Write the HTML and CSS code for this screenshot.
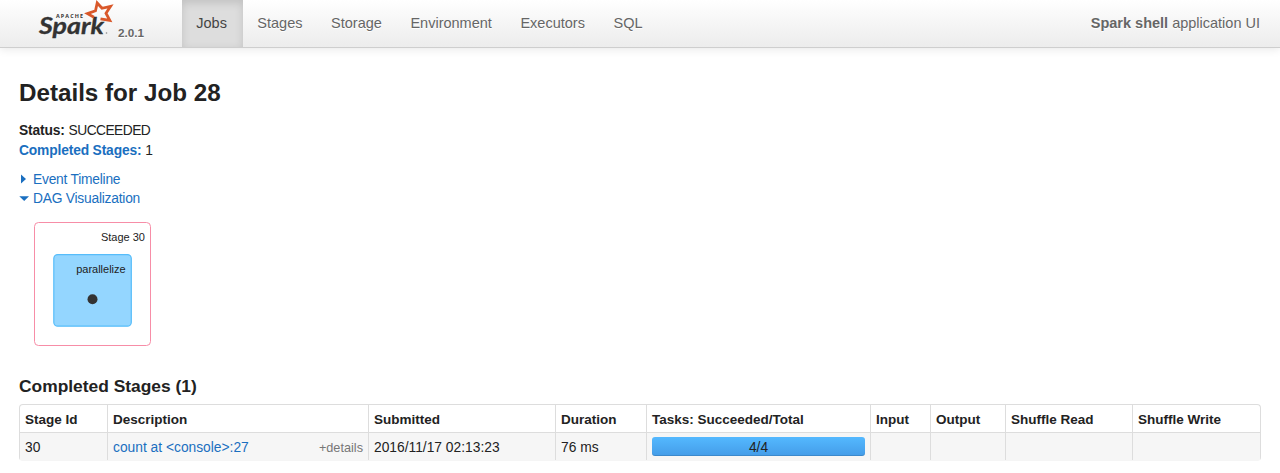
FILE: index.html
```html
<!DOCTYPE html>
<html lang="en">
<head>
<meta charset="utf-8">
<title>Spark shell - Details for Job 28</title>
<link rel="stylesheet" href="styles.css">
</head>
<body>
<header class="navbar">
  <a class="brand">
    <svg class="logo" width="76" height="42" viewBox="0 0 76 42">
      <text class="logo-apache" x="17" y="17.8" textLength="27">APACHE</text>
      <text class="logo-spark" x="0" y="34" textLength="65" lengthAdjust="spacingAndGlyphs">Spark</text>
      <path class="logo-star" d="M55 17.2 L48.5 13.6 L56.5 10.8 L58.2 3 L63 8.3 L71.5 6.3 L67 13.2 L70.8 20.3 L61.5 18.8"/>
      <circle class="logo-tm" cx="67.5" cy="33" r="0.8"/>
    </svg>
    <span class="version">2.0.1</span>
  </a>
  <nav class="nav">
    <a class="nav-item active">Jobs</a>
    <a class="nav-item">Stages</a>
    <a class="nav-item">Storage</a>
    <a class="nav-item">Environment</a>
    <a class="nav-item">Executors</a>
    <a class="nav-item">SQL</a>
  </nav>
  <p class="app-name"><strong>Spark shell</strong> application UI</p>
</header>
<main class="content">
  <h3 class="title">Details for Job 28</h3>
  <ul class="summary">
    <li><strong>Status:</strong> <span class="status">SUCCEEDED</span></li>
    <li><a class="link"><strong>Completed Stages:</strong></a> 1</li>
  </ul>
  <div class="toggle link">
    <svg class="arrow" width="12" height="12" viewBox="0 0 12 12"><path d="M2 0.6 L7 5 L2 9.4z"/></svg>
    <span>Event Timeline</span>
  </div>
  <div class="toggle link">
    <svg class="arrow" width="12" height="12" viewBox="0 0 12 12"><path d="M0.3 3.2 L10 3.2 L5.2 8z"/></svg>
    <span>DAG Visualization</span>
  </div>
  <svg class="dag" width="118" height="125" viewBox="0 0 118 125">
    <rect class="stage" x="0.5" y="0.5" width="116" height="123" rx="4"/>
    <text class="dag-label" x="111" y="19" text-anchor="end">Stage 30</text>
    <rect class="operation" x="19.8" y="32.6" width="77.5" height="71.6" rx="4"/>
    <text class="dag-label" x="91.7" y="51" text-anchor="end">parallelize</text>
    <circle class="rdd" cx="58.5" cy="77.2" r="5"/>
  </svg>
  <h4 class="subtitle">Completed Stages (1)</h4>
  <table class="stages">
    <colgroup>
      <col class="c-id"><col class="c-desc"><col class="c-sub"><col class="c-dur"><col class="c-tasks"><col class="c-in"><col class="c-out"><col class="c-read"><col class="c-write">
    </colgroup>
    <thead>
      <tr><th>Stage Id</th><th>Description</th><th>Submitted</th><th>Duration</th><th>Tasks: Succeeded/Total</th><th>Input</th><th>Output</th><th>Shuffle Read</th><th>Shuffle Write</th></tr>
    </thead>
    <tbody>
      <tr>
        <td>30</td>
        <td><div class="desc"><a class="link">count at &lt;console&gt;:27</a><span class="details">+details</span></div></td>
        <td>2016/11/17 02:13:23</td>
        <td>76 ms</td>
        <td><div class="progress">4/4</div></td>
        <td></td><td></td><td></td><td></td>
      </tr>
    </tbody>
  </table>
</main>
</body>
</html>
```
FILE: styles.css
```css
* { box-sizing: border-box; }
body {
  margin: 0;
  background: #fff;
  color: #222;
  font: 13.8px/20px "Liberation Sans", Arial, sans-serif;
}
.navbar {
  display: flex;
  height: 48px;
  border-bottom: 1px solid #cecece;
  background: linear-gradient(#fff, #ececec);
  box-shadow: 0 1px 9px rgba(0, 0, 0, 0.1);
  color: #666;
  font-size: 14.5px;
  text-shadow: 0 1px 0 #fff;
}
.brand {
  display: flex;
  width: 182px;
  padding-left: 39px;
}
.logo { flex: none; overflow: visible; text-shadow: none; }
.logo-apache { font: bold 5.4px "Open Sans", sans-serif; fill: #333; }
.logo-spark {
  font: italic bold 23.5px Lato, sans-serif;
  fill: #333;
  stroke: #333;
  stroke-width: 0.3;
}
.logo-star { fill: none; stroke: #d9582a; stroke-width: 2.8; }
.logo-tm { fill: #888; }
.version {
  padding: 23px 0 0 3px;
  font-size: 11.7px;
  font-weight: bold;
}
.nav { display: flex; }
.nav-item { height: 47px; padding: 13px 14.3px 0; }
.active {
  width: 61px;
  background: #ddd;
  box-shadow: inset 0 3px 8px rgba(0, 0, 0, 0.13);
  color: #444;
  text-shadow: none;
}
.app-name { margin: 13px 20px 0 auto; }
.content { padding: 29px 19px 0; }
.title {
  margin: 0;
  font-size: 24.2px;
  line-height: 32px;
}
.summary {
  margin: 12px 0 9px;
  padding: 0;
  list-style: none;
}
.summary strong { letter-spacing: -0.15px; }
.status { letter-spacing: -0.55px; }
.link { color: #1a6fc0; }
.toggle {
  display: flex;
  align-items: center;
  height: 19px;
  letter-spacing: -0.23px;
}
.arrow { margin-right: 2px; fill: currentColor; }
.dag { display: block; margin: 14px 0 0 15px; }
.stage { fill: #fff; stroke: #f78da7; }
.operation { fill: #94d6ff; stroke: #57bdfa; stroke-width: 1.2; }
.dag-label { font-size: 11px; fill: #222; }
.rdd { fill: #333; }
.subtitle { margin: 29px 0 8px; font-size: 17.4px; line-height: 20px; }
.stages {
  width: 1242px;
  table-layout: fixed;
  border: 1px solid #ddd;
  border-bottom-color: #f5f5f5;
  border-radius: 4px;
  border-collapse: separate;
  border-spacing: 0;
}
.stages th, .stages td {
  height: 27px;
  padding: 2px 5px 0;
  text-align: left;
  white-space: nowrap;
}
.stages th { font-size: 13.5px; }
.stages th + th, .stages td + td { border-left: 1px solid #ddd; }
.stages td {
  height: 28px;
  border-top: 1px solid #ddd;
  background: #f6f6f6;
}
.c-id { width: 87px; }
.c-desc { width: 261px; }
.c-sub { width: 187px; }
.c-dur { width: 91px; }
.c-tasks { width: 224px; }
.c-in { width: 60px; }
.c-out { width: 75px; }
.c-read { width: 127px; }
.desc { display: flex; justify-content: space-between; }
.details { color: #777; font-size: 12.7px; }
.progress {
  height: 19px;
  margin-top: -2px;
  border-radius: 3px;
  background: linear-gradient(#54b9ff, #449ce8);
  box-shadow: inset 0 -1px 0 rgba(0, 0, 0, 0.12);
  line-height: 21px;
  text-align: center;
}
```
